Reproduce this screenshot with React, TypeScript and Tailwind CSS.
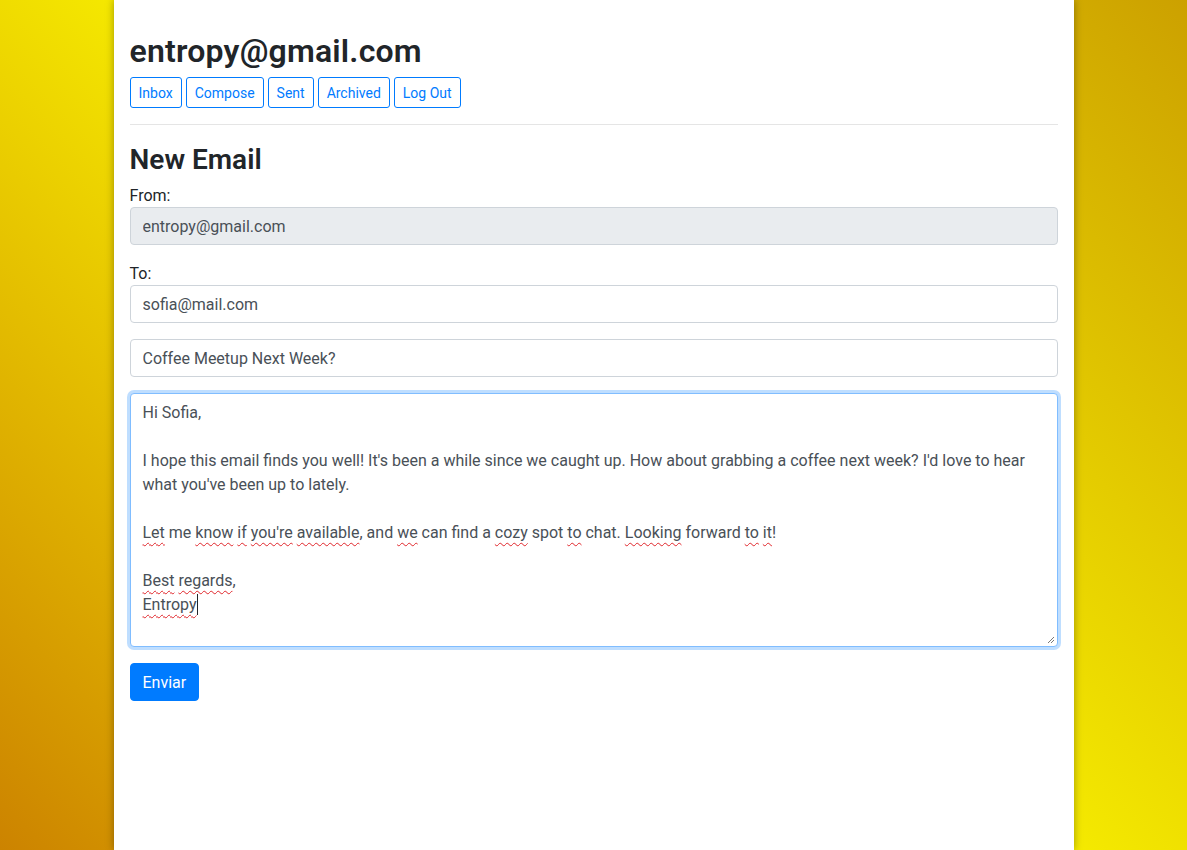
import React from 'react'

const NAV = ['Inbox', 'Compose', 'Sent', 'Archived', 'Log Out']

// words flagged by the spell checker get a wavy red underline
function W({ children }: { children: React.ReactNode }) {
  return (
    <span className="underline decoration-wavy decoration-[#e0262b] decoration-1 underline-offset-[4px]">
      {children}
    </span>
  )
}

export default function App() {
  return (
    <div
      className="min-h-screen flex justify-center bg-[linear-gradient(45deg,#cc8300,#f7ee00_50%,#cca100)] text-[#212529]"
      style={{ fontFamily: 'Roboto, "Noto Sans", Arial, sans-serif' }}
    >
      <div className="w-[960px] min-h-screen bg-white px-4 pt-[32px] shadow-[0_0_8px_rgba(0,0,0,0.35)]">
        {/* Header */}
        <h2 className="text-[32px] leading-[1.2] font-semibold mb-[7px] tracking-[0.2px]">entropy@gmail.com</h2>
        <div className="flex gap-[4px]">
          {NAV.map((label) => (
            <button
              key={label}
              className="h-[31px] px-2 pt-[2px] text-[14px] leading-[21px] text-[#007bff] border border-[#007bff] rounded-[3px] bg-white"
            >
              {label}
            </button>
          ))}
        </div>
        <hr className="my-4 border-0 border-t border-[rgba(0,0,0,0.1)]" />

        <h3 className="text-[28px] leading-[1.2] font-semibold mb-2 pt-[2px] -mb-[0px]">New Email</h3>

        <form className="flex flex-col -mt-[2px]">
          <div className="mb-4">
            <label className="block text-[16px] leading-6 pt-[1px] -mb-[1px]">From:</label>
            <input
              disabled
              value="entropy@gmail.com"
              className="w-full h-[38px] px-3 pt-[2px] text-[16px] text-[#495057] bg-[#e9ecef] border border-[#ced4da] rounded-[4px]"
              readOnly
            />
          </div>
          <div className="mb-4">
            <label className="block text-[16px] leading-6 pt-[1px] -mb-[1px]">To:</label>
            <input
              defaultValue="sofia@mail.com"
              className="w-full h-[38px] px-3 pt-[2px] text-[16px] text-[#495057] bg-white border border-[#ced4da] rounded-[4px] outline-none"
            />
          </div>
          <div className="mb-4">
            <input
              defaultValue="Coffee Meetup Next Week?"
              className="w-full h-[38px] px-3 pt-[2px] text-[16px] text-[#495057] bg-white border border-[#ced4da] rounded-[4px] outline-none"
            />
          </div>
          <div className="mb-4 relative">
            <div className="w-full h-[254px] px-3 pt-[7px] pb-[5px] text-[16px] leading-6 text-[#495057] bg-white border border-[#80bdff] rounded-[4px] shadow-[0_0_0_3px_rgba(0,123,255,0.25)]">
              <div>Hi Sofia,</div>
              <div>&nbsp;</div>
              <div>
                I hope this email finds you well! It's been a while since we caught up. How about grabbing a coffee
                next week? I'd love to hear
              </div>
              <div>what you've been up to lately.</div>
              <div>&nbsp;</div>
              <div>
                <W>Let</W> me <W>know</W> <W>if</W> <W>you're</W> <W>available</W>, and <W>we</W> can find a{' '}
                <W>cozy</W> spot <W>to</W> chat. <W>Looking</W> forward <W>to</W> <W>it</W>!
              </div>
              <div>&nbsp;</div>
              <div>
                <W>Best</W> <W>regards</W>,
              </div>
              <div className="flex items-center">
                <W>Entropy</W>
                <span className="inline-block w-px h-[21px] bg-[#212529]" />
              </div>
            </div>
            {/* resize grip */}
            <svg className="absolute right-[3px] bottom-[3px]" width="9" height="9" viewBox="0 0 9 9">
              <path d="M8 2L2 8M8 5L5 8" stroke="#777" strokeWidth="1" />
            </svg>
          </div>
          <div>
            <button
              type="button"
              className="h-[38px] px-3 pt-[2px] text-[16px] text-white bg-[#007bff] border border-[#007bff] rounded-[4px]"
            >
              Enviar
            </button>
          </div>
        </form>
      </div>
    </div>
  )
}
